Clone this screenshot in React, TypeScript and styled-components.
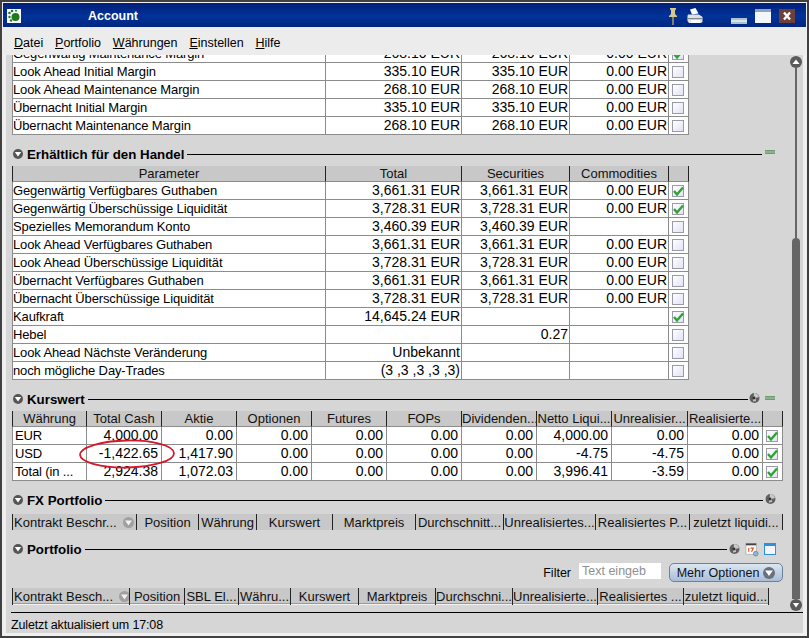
import React from 'react';
import styled, { createGlobalStyle } from 'styled-components';

const GlobalStyle = createGlobalStyle`
    html, body {
        margin: 0;
        padding: 0;
        background: #404040;
    }
`;

const Window = styled.div`
    box-sizing: border-box;
    width: 809px;
    height: 638px;
    border: 2px solid #404040;
    background: #f0f0f0;
    padding: 1px 1px 3px 1px;
    display: flex;
    flex-direction: column;
    overflow: hidden;
    font-family: "Liberation Sans", Arial, sans-serif;
    font-size: 12.5px;
    color: #000;
`;

const TitleBar = styled.div`
    flex: none;
    height: 24px;
    display: flex;
    align-items: center;
    background: linear-gradient(180deg, #001f78 0%, #003399 55%, #00267f 100%);
    color: #fff;
    padding: 0 11px 0 4px;
`;

const AppLogo = styled.svg`
    width: 14px;
    height: 14px;
    flex: none;
    margin-top: 2px;
`;

const TitleText = styled.span`
    font-weight: bold;
    font-size: 12.5px;
    margin-left: 67px;
    margin-top: 1px;
    flex: 1;
`;

const TitleIcons = styled.div`
    display: flex;
    align-items: center;
`;

const TitleIcon = styled.svg<{ gap: number; drop?: number }>`
    display: block;
    margin-left: ${({ gap }) => gap}px;
    margin-top: ${({ drop }) => drop || 0}px;
`;

const MenuBar = styled.div`
    flex: none;
    height: 28px;
    background: #ececec;
    display: flex;
    align-items: center;
    padding: 3px 0 0 11px;
    box-sizing: border-box;
    gap: 11.9px;
`;

const MenuItem = styled.span`
    u {
        text-underline-offset: 1px;
    }
`;

const Pane = styled.div`
    flex: 1;
    min-height: 0;
    margin: 0 3px;
    background: #d6d6d6;
    display: flex;
    flex-direction: column;
`;

const ScrollRow = styled.div`
    flex: none;
    height: 557px;
    display: flex;
    overflow: hidden;
`;

const Content = styled.div`
    flex: none;
    width: 783px;
    padding-left: 6px;
    box-sizing: border-box;
    overflow: hidden;
`;

const ScrollBar = styled.div`
    flex: none;
    width: 13px;
    display: flex;
    flex-direction: column;
    align-items: center;
    padding-top: 1px;
`;

const ScrollButton = styled.div`
    flex: none;
    width: 12px;
    height: 12px;
    border-radius: 50%;
    background: #5a5a5a;
    display: flex;
    align-items: center;
    justify-content: center;
`;

const ScrollTrack = styled.div`
    flex: none;
    width: 2px;
    height: 170px;
    background: #666;
`;

const ScrollThumb = styled.div`
    flex: none;
    width: 8px;
    height: 361px;
    background: #666;
    border-radius: 4px 4px 0 0;
`;

const ClippedTable = styled.div`
    margin-top: -10px;
`;

const Heading = styled.div<{ top: number; bottom: number }>`
    display: flex;
    align-items: center;
    height: 14px;
    margin-top: ${({ top }) => top}px;
    margin-bottom: ${({ bottom }) => bottom}px;
    padding-left: 1px;
`;

const HeadingTitle = styled.span`
    font-weight: bold;
    font-size: 13.3px;
    margin-left: 4px;
    margin-right: 3px;
`;

const HeadingLine = styled.div<{ endX: number }>`
    height: 1px;
    background: #000;
    flex: 1;
    margin-right: ${({ endX }) => endX}px;
`;

const Roll = styled.div`
    flex: none;
    width: 10px;
    height: 10px;
    border-radius: 50%;
    background: #555;
    display: flex;
    align-items: center;
    justify-content: center;
`;

const HeadingIcons = styled.div<{ end: number; lift?: number }>`
    display: flex;
    align-items: center;
    gap: 5px;
    margin-right: ${({ end }) => end}px;
    margin-bottom: ${({ lift }) => lift || 0}px;
`;

const Grid = styled.div<{ cols: string }>`
    display: grid;
    grid-template-columns: ${({ cols }) => cols};
    width: max-content;
`;

const HeadCell = styled.div<{ first?: boolean }>`
    box-sizing: border-box;
    height: 16px;
    line-height: 16px;
    font-size: 13px;
    background: #c8c8c8;
    text-align: center;
    color: #111;
    border-right: 1px solid #222;
    border-bottom: 1px solid #8c8c8c;
    ${({ first }) => first && 'border-left: 1px solid #222;'}
    white-space: nowrap;
    overflow: hidden;
`;

const Cell = styled.div<{ right?: boolean; first?: boolean; pad: number }>`
    box-sizing: border-box;
    height: 18px;
    line-height: 17px;
    background: #fff;
    padding: 0 ${({ pad }) => pad}px;
    text-align: ${({ right }) => (right ? 'right' : 'left')};
    font-size: ${({ right }) => (right ? '14px' : '13px')};
    letter-spacing: ${({ right }) => (right ? '0' : '-0.13px')};
    border-right: 1px solid #8c8c8c;
    border-bottom: 1px solid #8c8c8c;
    ${({ first }) => first && 'border-left: 1px solid #8c8c8c;'}
    white-space: nowrap;
    overflow: hidden;
`;

const CheckCell = styled(Cell)`
    display: flex;
    align-items: center;
    justify-content: center;
    padding: 0 2px 0 0;
`;

const Box = styled.div`
    position: relative;
    box-sizing: border-box;
    width: 12px;
    height: 12px;
    border: 1px solid #9a9aa8;
    background: linear-gradient(135deg, #ffffff, #e2e2f6);
`;

const Tick = styled.svg`
    position: absolute;
    left: -1px;
    top: -1px;
`;

const KursWrap = styled.div`
    position: relative;
`;

const RedRing = styled.svg`
    position: absolute;
    left: 66px;
    top: 28px;
    pointer-events: none;
`;

const StripCell = styled.div<{ first?: boolean; tall: number; line?: boolean }>`
    box-sizing: border-box;
    height: ${({ tall }) => tall}px;
    font-size: 13px;
    background: #c8c8c8;
    color: #111;
    white-space: nowrap;
    overflow: hidden;
    display: flex;
    align-items: center;
    justify-content: ${({ first }) => (first ? 'flex-start' : 'center')};
    gap: 6px;
    padding-left: ${({ first }) => (first ? '1px' : '0')};
    border-right: 1px solid #222;
    ${({ first }) => first && 'border-left: 1px solid #222;'}
    ${({ line }) => line && 'box-shadow: inset 0 -1px 0 #f2f2f2, inset 0 -2px 0 #9a9a9a;'}
`;

const FilterRow = styled.div`
    display: flex;
    align-items: center;
    justify-content: flex-end;
    height: 19px;
    width: 771px;
    margin-bottom: 6px;
`;

const FilterLabel = styled.span`
    margin-right: 8px;
`;

const FilterInput = styled.div`
    box-sizing: border-box;
    width: 82px;
    height: 16px;
    line-height: 16px;
    background: #fff;
    color: #8f8f8f;
    padding-left: 3px;
    margin-right: 8px;
    margin-bottom: 3px;
`;

const MoreButton = styled.div`
    box-sizing: border-box;
    width: 114px;
    height: 19px;
    border: 1px solid #6d8199;
    border-radius: 5px;
    background: linear-gradient(180deg, #dbe6f2, #a9bed6);
    display: flex;
    align-items: center;
    justify-content: center;
    gap: 4px;
    color: #111;
`;

const ButtonRoll = styled(Roll)`
    width: 12px;
    height: 12px;
    background: #68727c;
`;

const StatusBar = styled.div`
    flex: none;
    height: 20px;
    line-height: 25px;
    margin-left: 5px;
    border-top: 1px solid #000;
    font-size: 12.5px;
    letter-spacing: -0.15px;
`;

const Triangle = ({ up, size = 10 }: { up?: boolean; size?: number }) => (
    <svg width={size} height={size} viewBox="0 0 10 10">
        <path d={up ? 'M5 2.5 L8.5 7 L1.5 7 Z' : 'M1.8 3 L8.2 3 L5 7.5 Z'} fill="#fff" />
    </svg>
);

const SortDot = () => (
    <svg width="11" height="11" viewBox="0 0 13 13" style={{ flex: 'none' }}>
        <circle cx="6.5" cy="6.5" r="6.5" fill="#a0a0a0" />
        <path d="M2.5 4 L10.5 4 L6.5 10 Z" fill="#f2f2f2" />
    </svg>
);

const Wrench = () => (
    <svg width="11" height="12" viewBox="0 0 11 12">
        <circle cx="5.5" cy="6" r="5" fill="#5f5f5f" />
        <path d="M5 1 A5 5 0 0 1 10 5 L6.5 6 L7 9 L4 9.5 Z" fill="#c9c9c9" />
        <circle cx="5" cy="6" r="1.4" fill="#2f2f2f" />
    </svg>
);

const Minus = () => (
    <svg width="10" height="4" viewBox="0 0 10 4">
        <rect width="10" height="4" fill="#6f9a72" />
        <rect y="1.5" width="10" height="1" fill="#a9c9aa" />
    </svg>
);

const CalendarIcon = () => (
    <svg width="14" height="15" viewBox="0 0 15 15">
        <rect x="1" y="1" width="11" height="12" fill="#fafafa" stroke="#999" strokeWidth="0.6" />
        <path d="M1 1 H12 V3 H1 Z" fill="#444" />
        <path d="M4 6 V10 M6 6 H9 L7 10" stroke="#e3501a" strokeWidth="1.2" fill="none" />
        <circle cx="11.5" cy="12" r="2.5" fill="#8fb7d8" stroke="#4d7ca3" strokeWidth="0.7" />
    </svg>
);

const PanelIcon = () => (
    <svg width="12" height="12" viewBox="0 0 12 12">
        <rect x="0.5" y="0.5" width="11" height="11" fill="#f4f4ff" stroke="#2f8fe0" />
        <rect x="1" y="1" width="10" height="2" fill="#2f8fe0" />
    </svg>
);

const Check = ({ on }: { on?: boolean }) => (
    <Box>
        {on && (
            <Tick width="13" height="13" viewBox="0 0 13 13">
                <path d="M2 6 L5 9.5 L11 2.5" stroke="#2fa32f" strokeWidth="2.4" fill="none" />
            </Tick>
        )}
    </Box>
);

const marginRows = [
    ['Gegenwärtig Maintenance Margin', '268.10 EUR', '268.10 EUR', '0.00 EUR', true],
    ['Look Ahead Initial Margin', '335.10 EUR', '335.10 EUR', '0.00 EUR', false],
    ['Look Ahead Maintenance Margin', '268.10 EUR', '268.10 EUR', '0.00 EUR', false],
    ['Übernacht Initial Margin', '335.10 EUR', '335.10 EUR', '0.00 EUR', false],
    ['Übernacht Maintenance Margin', '268.10 EUR', '268.10 EUR', '0.00 EUR', false],
] as const;

const tradeRows = [
    ['Gegenwärtig Verfügbares Guthaben', '3,661.31 EUR', '3,661.31 EUR', '0.00 EUR', true],
    ['Gegenwärtig Überschüssige Liquidität', '3,728.31 EUR', '3,728.31 EUR', '0.00 EUR', true],
    ['Spezielles Memorandum Konto', '3,460.39 EUR', '3,460.39 EUR', '', false],
    ['Look Ahead Verfügbares Guthaben', '3,661.31 EUR', '3,661.31 EUR', '0.00 EUR', false],
    ['Look Ahead Überschüssige Liquidität', '3,728.31 EUR', '3,728.31 EUR', '0.00 EUR', false],
    ['Übernacht Verfügbares Guthaben', '3,661.31 EUR', '3,661.31 EUR', '0.00 EUR', false],
    ['Übernacht Überschüssige Liquidität', '3,728.31 EUR', '3,728.31 EUR', '0.00 EUR', false],
    ['Kaufkraft', '14,645.24 EUR', '', '', true],
    ['Hebel', '', '0.27', '', false],
    ['Look Ahead Nächste Veränderung', 'Unbekannt', '', '', false],
    ['noch mögliche Day-Trades', '(3 ,3 ,3 ,3 ,3)', '', '', false],
] as const;

const kursHead = ['Währung', 'Total Cash', 'Aktie', 'Optionen', 'Futures', 'FOPs', 'Dividenden...', 'Netto Liqui...', 'Unrealisier...', 'Realisierte...', ''];
const kursRows = [
    ['EUR', '4,000.00', '0.00', '0.00', '0.00', '0.00', '0.00', '4,000.00', '0.00', '0.00'],
    ['USD', '-1,422.65', '1,417.90', '0.00', '0.00', '0.00', '0.00', '-4.75', '-4.75', '0.00'],
    ['Total (in ...', '2,924.38', '1,072.03', '0.00', '0.00', '0.00', '0.00', '3,996.41', '-3.59', '0.00'],
];

const fxStrip: [string, number][] = [
    ['Kontrakt Beschr...', 125], ['Position', 62], ['Währung', 58], ['Kurswert', 76], ['Marktpreis', 83],
    ['Durchschnitt...', 88], ['Unrealisiertes...', 92], ['Realisiertes P...', 94], ['zuletzt liquidi...', 93],
];

const portfolioStrip: [string, number][] = [
    ['Kontrakt Besch...', 118], ['Position', 55], ['SBL El...', 54], ['Währu...', 52], ['Kurswert', 68],
    ['Marktpreis', 77], ['Durchschni...', 77], ['Unrealisierte...', 85], ['Realisiertes ...', 86], ['zuletzt liquid...', 85],
];

const MARGIN_COLS = '314px 136px 108px 99px 20px';
const KURS_COLS = '75px 75px 75px 75px 75px 75px 75px 75px 76px 75px 20px';

const Strip = ({ cells, tall, line }: { cells: [string, number][]; tall: number; line?: boolean }) => (
    <Grid cols={cells.map(([, w]) => `${w}px`).join(' ')}>
        {cells.map(([label], i) => (
            <StripCell key={label} first={i === 0} tall={tall} line={line}>
                {label}
                {i === 0 && <SortDot />}
            </StripCell>
        ))}
    </Grid>
);

const App = () => {
    return (
        <Window>
            <GlobalStyle />
            <TitleBar>
                <AppLogo viewBox="0 0 14 14">
                    <rect width="14" height="14" fill="#fff" />
                    <circle cx="8.5" cy="8" r="4" fill="#1d7a1d" />
                    <circle cx="2.5" cy="4" r="1.3" fill="#1d7a1d" />
                    <circle cx="5" cy="2" r="1.3" fill="#1d7a1d" />
                    <circle cx="9" cy="1.8" r="1" fill="#1d7a1d" />
                    <circle cx="2.5" cy="8" r="1.2" fill="#1d7a1d" />
                    <circle cx="4" cy="11.5" r="1.2" fill="#1d7a1d" />
                </AppLogo>
                <TitleText>Account</TitleText>
                <TitleIcons>
                    <TitleIcon gap={0} drop={3} width="8" height="17" viewBox="0 0 8 17">
                        <path d="M1 0 H7 V1.5 L6 2 V6 L8 8 V9 H0 V8 L2 6 V2 L1 1.5 Z" fill="#d8c890" />
                        <rect x="3.3" y="9" width="1.4" height="8" fill="#b8a468" />
                    </TitleIcon>
                    <TitleIcon gap={10} drop={2} width="16" height="16" viewBox="0 0 16 16">
                        <path d="M3 1.5 L8.5 0 L11.5 5.5 L5 6.5 Z" fill="#ffffff" />
                        <path d="M1 6.5 H12 L15.5 9 V14 L14 15 H2 L0.5 13 V8 Z" fill="#dfe3e6" />
                        <rect x="1" y="10" width="14.5" height="1.2" fill="#7f878d" />
                        <rect x="4" y="12" width="9" height="3" fill="#ffffff" />
                    </TitleIcon>
                    <TitleIcon gap={28} drop={11} width="16" height="6" viewBox="0 0 16 6">
                        <rect width="16" height="6" fill="#a9c3d3" />
                        <rect y="2" width="16" height="2" fill="#d8e4ea" />
                    </TitleIcon>
                    <TitleIcon gap={8} drop={2} width="16" height="14" viewBox="0 0 16 14">
                        <rect width="16" height="14" fill="#f4f6fa" />
                        <rect width="16" height="3" fill="#8ea6b8" />
                    </TitleIcon>
                    <TitleIcon gap={8} drop={2} width="16" height="14" viewBox="0 0 16 14">
                        <rect width="16" height="14" fill="#6e4038" />
                        <path d="M5 3.5 L11 10.5 M11 3.5 L5 10.5" stroke="#fff" strokeWidth="2.4" />
                    </TitleIcon>
                </TitleIcons>
            </TitleBar>
            <MenuBar>
                <MenuItem><u>D</u>atei</MenuItem>
                <MenuItem><u>P</u>ortfolio</MenuItem>
                <MenuItem><u>W</u>ährungen</MenuItem>
                <MenuItem><u>E</u>instellen</MenuItem>
                <MenuItem><u>H</u>ilfe</MenuItem>
            </MenuBar>
            <Pane>
                <ScrollRow>
                    <Content>
                        <ClippedTable>
                            <Grid cols={MARGIN_COLS}>
                                {marginRows.map(row => (
                                    <React.Fragment key={row[0]}>
                                        <Cell first pad={0}>{row[0]}</Cell>
                                        <Cell right pad={1}>{row[1]}</Cell>
                                        <Cell right pad={1}>{row[2]}</Cell>
                                        <Cell right pad={1}>{row[3]}</Cell>
                                        <CheckCell pad={0}><Check on={row[4]} /></CheckCell>
                                    </React.Fragment>
                                ))}
                            </Grid>
                        </ClippedTable>

                        <Heading top={12} bottom={5}>
                            <Roll><Triangle /></Roll>
                            <HeadingTitle>Erhältlich für den Handel</HeadingTitle>
                            <HeadingLine endX={3} />
                            <HeadingIcons end={14} lift={4}><Minus /></HeadingIcons>
                        </Heading>
                        <Grid cols={MARGIN_COLS}>
                            <HeadCell first>Parameter</HeadCell>
                            <HeadCell>Total</HeadCell>
                            <HeadCell>Securities</HeadCell>
                            <HeadCell>Commodities</HeadCell>
                            <HeadCell />
                            {tradeRows.map(row => (
                                <React.Fragment key={row[0]}>
                                    <Cell first pad={0}>{row[0]}</Cell>
                                    <Cell right pad={1}>{row[1]}</Cell>
                                    <Cell right pad={1}>{row[2]}</Cell>
                                    <Cell right pad={1}>{row[3]}</Cell>
                                    <CheckCell pad={0}><Check on={row[4]} /></CheckCell>
                                </React.Fragment>
                            ))}
                        </Grid>

                        <Heading top={12} bottom={5}>
                            <Roll><Triangle /></Roll>
                            <HeadingTitle>Kurswert</HeadingTitle>
                            <HeadingLine endX={1} />
                            <HeadingIcons end={14} lift={3}><Wrench /><Minus /></HeadingIcons>
                        </Heading>
                        <KursWrap>
                            <Grid cols={KURS_COLS}>
                                {kursHead.map((label, i) => (
                                    <HeadCell key={label || i} first={i === 0}>{label}</HeadCell>
                                ))}
                                {kursRows.map(row => (
                                    <React.Fragment key={row[0]}>
                                        {row.map((value, i) => (
                                            <Cell key={i} first={i === 0} right={i > 0} pad={i === 0 ? 2 : 3}>{value}</Cell>
                                        ))}
                                        <CheckCell pad={0}><Check on /></CheckCell>
                                    </React.Fragment>
                                ))}
                            </Grid>
                            <RedRing width="98" height="30" viewBox="0 0 98 30">
                                <ellipse cx="49" cy="15" rx="47" ry="13.5" fill="none" stroke="#d8162a" strokeWidth="1.8" transform="rotate(-1 49 15)" />
                            </RedRing>
                        </KursWrap>

                        <Heading top={12} bottom={7}>
                            <Roll><Triangle /></Roll>
                            <HeadingTitle>FX Portfolio</HeadingTitle>
                            <HeadingLine endX={2} />
                            <HeadingIcons end={13} lift={3}><Wrench /></HeadingIcons>
                        </Heading>
                        <Strip cells={fxStrip} tall={16} />

                        <Heading top={12} bottom={7}>
                            <Roll><Triangle /></Roll>
                            <HeadingTitle>Portfolio</HeadingTitle>
                            <HeadingLine endX={2} />
                            <HeadingIcons end={13}><Wrench /><CalendarIcon /><PanelIcon /></HeadingIcons>
                        </Heading>
                        <FilterRow>
                            <FilterLabel>Filter</FilterLabel>
                            <FilterInput>Text eingeb</FilterInput>
                            <MoreButton>
                                Mehr Optionen
                                <ButtonRoll><Triangle size={12} /></ButtonRoll>
                            </MoreButton>
                        </FilterRow>
                        <Strip cells={portfolioStrip} tall={17} line />
                    </Content>
                    <ScrollBar>
                        <ScrollButton><Triangle up /></ScrollButton>
                        <ScrollTrack />
                        <ScrollThumb />
                        <ScrollButton><Triangle /></ScrollButton>
                    </ScrollBar>
                </ScrollRow>
                <StatusBar>Zuletzt aktualisiert um 17:08</StatusBar>
            </Pane>
        </Window>
    );
};

export default App;
